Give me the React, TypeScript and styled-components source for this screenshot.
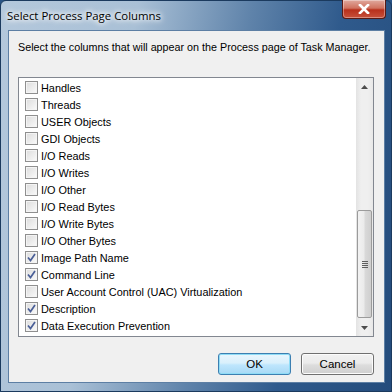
import styled, {createGlobalStyle} from "styled-components";

const GlobalStyle = createGlobalStyle`
  html, body {
    margin: 0;
    padding: 0;
    background: #2a5486;
  }
  #root {
    width: 392px;
    height: 392px;
  }
`;

type Column = {label: string; checked: boolean};

const columns: Column[] = [
  {label: "Handles", checked: false},
  {label: "Threads", checked: false},
  {label: "USER Objects", checked: false},
  {label: "GDI Objects", checked: false},
  {label: "I/O Reads", checked: false},
  {label: "I/O Writes", checked: false},
  {label: "I/O Other", checked: false},
  {label: "I/O Read Bytes", checked: false},
  {label: "I/O Write Bytes", checked: false},
  {label: "I/O Other Bytes", checked: false},
  {label: "Image Path Name", checked: true},
  {label: "Command Line", checked: true},
  {label: "User Account Control (UAC) Virtualization", checked: false},
  {label: "Description", checked: true},
  {label: "Data Execution Prevention", checked: true},
];

const CheckBox = ({checked}: {checked: boolean}) => (
  <Box>
    {checked ? (
      <svg width="9" height="9" viewBox="0 0 9 9">
        <path d="M1 4.5 L3.5 7.5 L8 1" fill="none" stroke="#4a5f97" strokeWidth="1.7"/>
      </svg>
    ) : undefined}
  </Box>
);

export default function App() {
  return (
    <>
      <GlobalStyle/>
      <Frame>
        <TitleBar>
          <Title>Select Process Page Columns</Title>
          <CloseButton>
            <svg width="12" height="10" viewBox="0 0 12 10">
              <path d="M2 1 L10 9 M10 1 L2 9" stroke="#fff" strokeWidth="2.6" strokeLinecap="square"/>
            </svg>
          </CloseButton>
        </TitleBar>
        <Client>
          <Prompt>Select the columns that will appear on the Process page of Task Manager.</Prompt>
          <ListBox>
            <Items>
              {columns.map((c) => (
                <Item key={c.label}>
                  <CheckBox checked={c.checked}/>
                  <Label>{c.label}</Label>
                </Item>
              ))}
            </Items>
            <ScrollBar>
              <Arrow>
                <svg width="7" height="4" viewBox="0 0 7 4"><path d="M3.5 0 L7 4 L0 4 Z" fill="#4d4d4d"/></svg>
              </Arrow>
              <Track>
                <Thumb>
                  <Grip/>
                </Thumb>
              </Track>
              <Arrow>
                <svg width="7" height="4" viewBox="0 0 7 4"><path d="M0 0 L7 0 L3.5 4 Z" fill="#4d4d4d"/></svg>
              </Arrow>
            </ScrollBar>
          </ListBox>
          <Buttons>
            <Button $default>OK</Button>
            <Button>Cancel</Button>
          </Buttons>
        </Client>
      </Frame>
    </>
  );
}

const Frame = styled.div`
  width: 392px;
  height: 392px;
  box-sizing: border-box;
  display: flex;
  flex-direction: column;
  padding: 0 6px 8px 7px;
  border: 1px solid #1b3a5e;
  border-radius: 6px 6px 0 0;
  background: linear-gradient(100deg, #b4c8dc 0%, #a9c0d6 30%, #5f83aa 55%, #2f5a8c 75%, #244c7c 100%);
  font-family: "Liberation Sans", Arial, sans-serif;
`;

const TitleBar = styled.div`
  height: 29px;
  display: flex;
  align-items: flex-start;
  justify-content: space-between;
`;

const Title = styled.div`
  margin-top: 7px;
  margin-left: -1px;
  font-family: "Open Sans", "Liberation Sans", sans-serif;
  font-size: 11.4px;
  color: #000;
  padding: 0 6px 0 0;
  text-shadow: 0 0 8px #fff, 0 0 6px #fff, 0 0 4px #fff;
`;

const CloseButton = styled.div`
  width: 44px;
  height: 19px;
  margin-top: -1px;
  margin-right: -1px;
  display: flex;
  align-items: center;
  justify-content: center;
  box-sizing: border-box;
  border: 1px solid #5a1a14;
  border-top: none;
  border-radius: 0 0 4px 4px;
  background: linear-gradient(#e0a99e 0%, #d0725f 45%, #b8301c 55%, #c8513b 100%);
  box-shadow: inset 0 0 0 1px rgba(255, 255, 255, 0.35);
`;

const Client = styled.div`
  flex: 1;
  display: flex;
  flex-direction: column;
  background: #f0f0f0;
  border: 1px solid #5d7fa4;
  padding: 0 10px 0 9px;
`;

const Prompt = styled.div`
  margin-top: 10px;
  font-size: 10.75px;
  color: #000;
  height: 16px;
  white-space: nowrap;
`;

const ListBox = styled.div`
  margin-top: 20px;
  height: 260px;
  box-sizing: border-box;
  border: 1px solid #828790;
  background: #fff;
  display: flex;
`;

const Items = styled.div`
  flex: 1;
  padding: 1px 0 0 6px;
`;

const Item = styled.div`
  height: 17px;
  display: flex;
  align-items: center;
  gap: 3px;
`;

const Box = styled.div`
  width: 13px;
  height: 13px;
  box-sizing: border-box;
  border: 1px solid #8f8f8f;
  background: linear-gradient(135deg, #dcdcdc 0%, #eeeeee 60%, #fbfbfb 100%);
  box-shadow: inset 0 0 0 1px #f4f4f4;
  display: flex;
  align-items: center;
  justify-content: center;
`;

const Label = styled.span`
  font-size: 10.9px;
  color: #000;
  white-space: nowrap;
`;

const ScrollBar = styled.div`
  width: 17px;
  display: flex;
  flex-direction: column;
  background: linear-gradient(90deg, #e3e3e3, #efefef 30%, #efefef 70%, #e8e8e8);
`;

const Arrow = styled.div`
  height: 17px;
  display: flex;
  align-items: center;
  justify-content: center;
`;

const Track = styled.div`
  flex: 1;
  display: flex;
  flex-direction: column;
  justify-content: flex-end;
  padding-bottom: 1px;
`;

const Thumb = styled.div`
  height: 108px;
  margin: 0 0 0 1px;
  width: 15px;
  box-sizing: border-box;
  border: 1px solid #9b9b9b;
  border-radius: 2px;
  background: linear-gradient(90deg, #f2f2f2 0%, #ebebeb 45%, #d9d9d9 55%, #cfcfcf 100%);
  display: flex;
  align-items: center;
  justify-content: center;
`;

const Grip = styled.div`
  width: 6px;
  height: 7px;
  background: repeating-linear-gradient(#5e5e5e 0 1px, transparent 1px 2px);
`;

const Buttons = styled.div`
  margin-top: 16px;
  display: flex;
  justify-content: flex-end;
  gap: 10px;
`;

const Button = styled.div<{$default?: boolean}>`
  width: 73px;
  height: 22px;
  box-sizing: border-box;
  border: 1px solid ${(p) => (p.$default ? "#3c7fb1" : "#707070")};
  border-radius: 3px;
  background: ${(p) =>
    p.$default
      ? "linear-gradient(#eaf6fd 0%, #d9f0fc 45%, #bee6fd 55%, #a7d9f5 100%)"
      : "linear-gradient(#f2f2f2 0%, #ebebeb 45%, #dddddd 55%, #cfcfcf 100%)"};
  box-shadow: inset 0 0 0 1px ${(p) => (p.$default ? "#8fdcf6" : "#fcfcfc")};
  display: flex;
  align-items: center;
  justify-content: center;
  font-size: 11.5px;
  color: #000;
`;
